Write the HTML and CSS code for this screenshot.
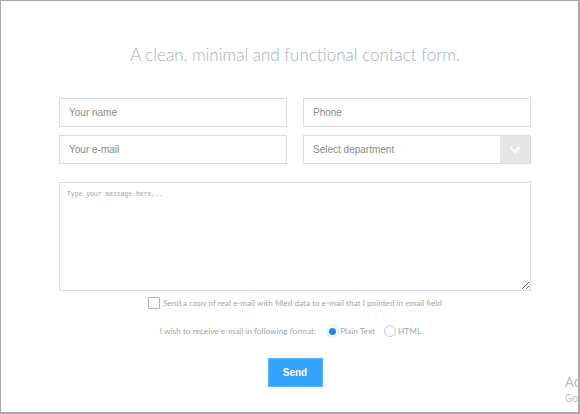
FILE: index.html
```html
<!DOCTYPE html>
<html>
<head>
<meta charset="utf-8">
<link rel="stylesheet" href="styles.css">
</head>
<body>
<div class="frame">
  <div class="wrap">
    <h1 class="title">A clean, minimal and functional contact form.</h1>
    <form class="form">
      <div class="grid">
        <input class="field" type="text" placeholder="Your name">
        <input class="field" type="text" placeholder="Phone">
        <input class="field" type="text" placeholder="Your e-mail">
        <div class="select">
          <span class="select-label">Select department</span>
          <span class="select-btn">
            <svg width="12" height="8" viewBox="0 0 12 8"><path d="M1.5 1.5 L6 6 L10.5 1.5" fill="none" stroke="#fff" stroke-width="2"/></svg>
          </span>
        </div>
      </div>
      <textarea class="message" placeholder="Type your message here..."></textarea>
      <label class="copy">
        <span class="box"></span>
        <span>Send a copy of real e-mail with filled data to e-mail that I pointed in email field</span>
      </label>
      <div class="format">
        <span class="format-label">I wish to receive e-mail in following format:</span>
        <span class="radio on"></span><span class="opt">Plain Text</span>
        <span class="radio"></span><span class="opt">HTML</span>
      </div>
      <div class="actions">
        <button type="button" class="send">Send</button>
      </div>
    </form>
  </div>
  <div class="watermark">
    <div class="wm1">Ac</div>
    <div class="wm2">Go</div>
  </div>
</div>
</body>
</html>
```

FILE: styles.css
```css
html, body {
  margin: 0;
  padding: 0;
  background: #fff;
}
.frame {
  position: relative;
  width: 580px;
  height: 414px;
  box-sizing: border-box;
  border: 1px solid #a9a9a9;
  border-right-width: 2px;
  border-bottom-width: 2px;
  overflow: hidden;
}
.wrap {
  width: 472px;
  margin-left: 58px;
  padding-top: 42px;
}
.title {
  margin: 0;
  text-align: center;
  font-family: Lato, sans-serif;
  font-weight: 300;
  font-size: 17px;
  line-height: 24px;
  color: #a9aeb8;
}
.form {
  margin-top: 31px;
  display: flex;
  flex-direction: column;
}
.grid {
  display: grid;
  grid-template-columns: 228px 228px;
  column-gap: 16px;
  row-gap: 8px;
}
.field, .select {
  box-sizing: border-box;
  height: 29px;
  border: 1px solid #dcdcdc;
  background: #fff;
  font-family: Arial, "Liberation Sans", sans-serif;
  font-size: 10px;
  color: #888;
  padding: 0 0 0 9px;
  outline: none;
  margin: 0;
}
.field::placeholder {
  color: #8a8a8a;
}
.select {
  display: flex;
  align-items: center;
  padding-right: 0;
}
.select-label {
  flex: 1;
  color: #8a8a8a;
}
.select-btn {
  width: 30px;
  align-self: stretch;
  background: #e6e6e6;
  display: flex;
  align-items: center;
  justify-content: center;
}
.message {
  box-sizing: border-box;
  margin: 18px 0 0 0;
  height: 109px;
  width: 472px;
  border: 1px solid #dcdcdc;
  padding: 8px 7px;
  font-family: "Liberation Mono", monospace;
  font-size: 6.4px;
  resize: vertical;
  outline: none;
  display: block;
}
.message::placeholder {
  color: #a0a0a0;
}
.copy {
  display: flex;
  justify-content: center;
  align-items: center;
  gap: 3px;
  margin-top: 5px;
  font-family: Lato, sans-serif;
  font-size: 8.2px;
  color: #a5a5a5;
  line-height: 14px;
}
.box {
  width: 12px;
  height: 12px;
  border: 1px solid #b0b0b0;
  border-radius: 1px;
  box-sizing: border-box;
  display: inline-block;
}
.format {
  display: flex;
  justify-content: center;
  align-items: center;
  margin-top: 14px;
  margin-left: -9px;
  font-family: Lato, sans-serif;
  font-size: 8.3px;
  color: #a5a5a5;
  line-height: 14px;
}
.format-label {
  margin-right: 11px;
}
.radio {
  width: 12px;
  height: 12px;
  box-sizing: border-box;
  border: 1px solid #c5c5c5;
  border-radius: 50%;
  display: inline-block;
  margin-right: 2px;
}
.radio.on {
  width: 11px;
  height: 11px;
  border: 2px solid #fff;
  background: #1e88f0;
  box-shadow: 0 0 0 1px #d8e8f8;
}
.opt {
  margin-right: 9px;
}
.opt:last-child {
  margin-right: 0;
}
.actions {
  display: flex;
  justify-content: center;
  margin-top: 20px;
}
.send {
  width: 55px;
  height: 29px;
  border: 1px solid #5ab4ff;
  background: #33a3ff;
  color: #fff;
  font-family: Arial, "Liberation Sans", sans-serif;
  font-weight: bold;
  font-size: 10px;
  padding: 0;
}
.watermark {
  position: absolute;
  left: 564px;
  top: 371px;
  font-family: "Open Sans", sans-serif;
  color: #b8b8b8;
  white-space: nowrap;
}
.wm1 {
  font-size: 14px;
  line-height: 19px;
}
.wm2 {
  font-size: 10px;
  line-height: 15px;
}
```
